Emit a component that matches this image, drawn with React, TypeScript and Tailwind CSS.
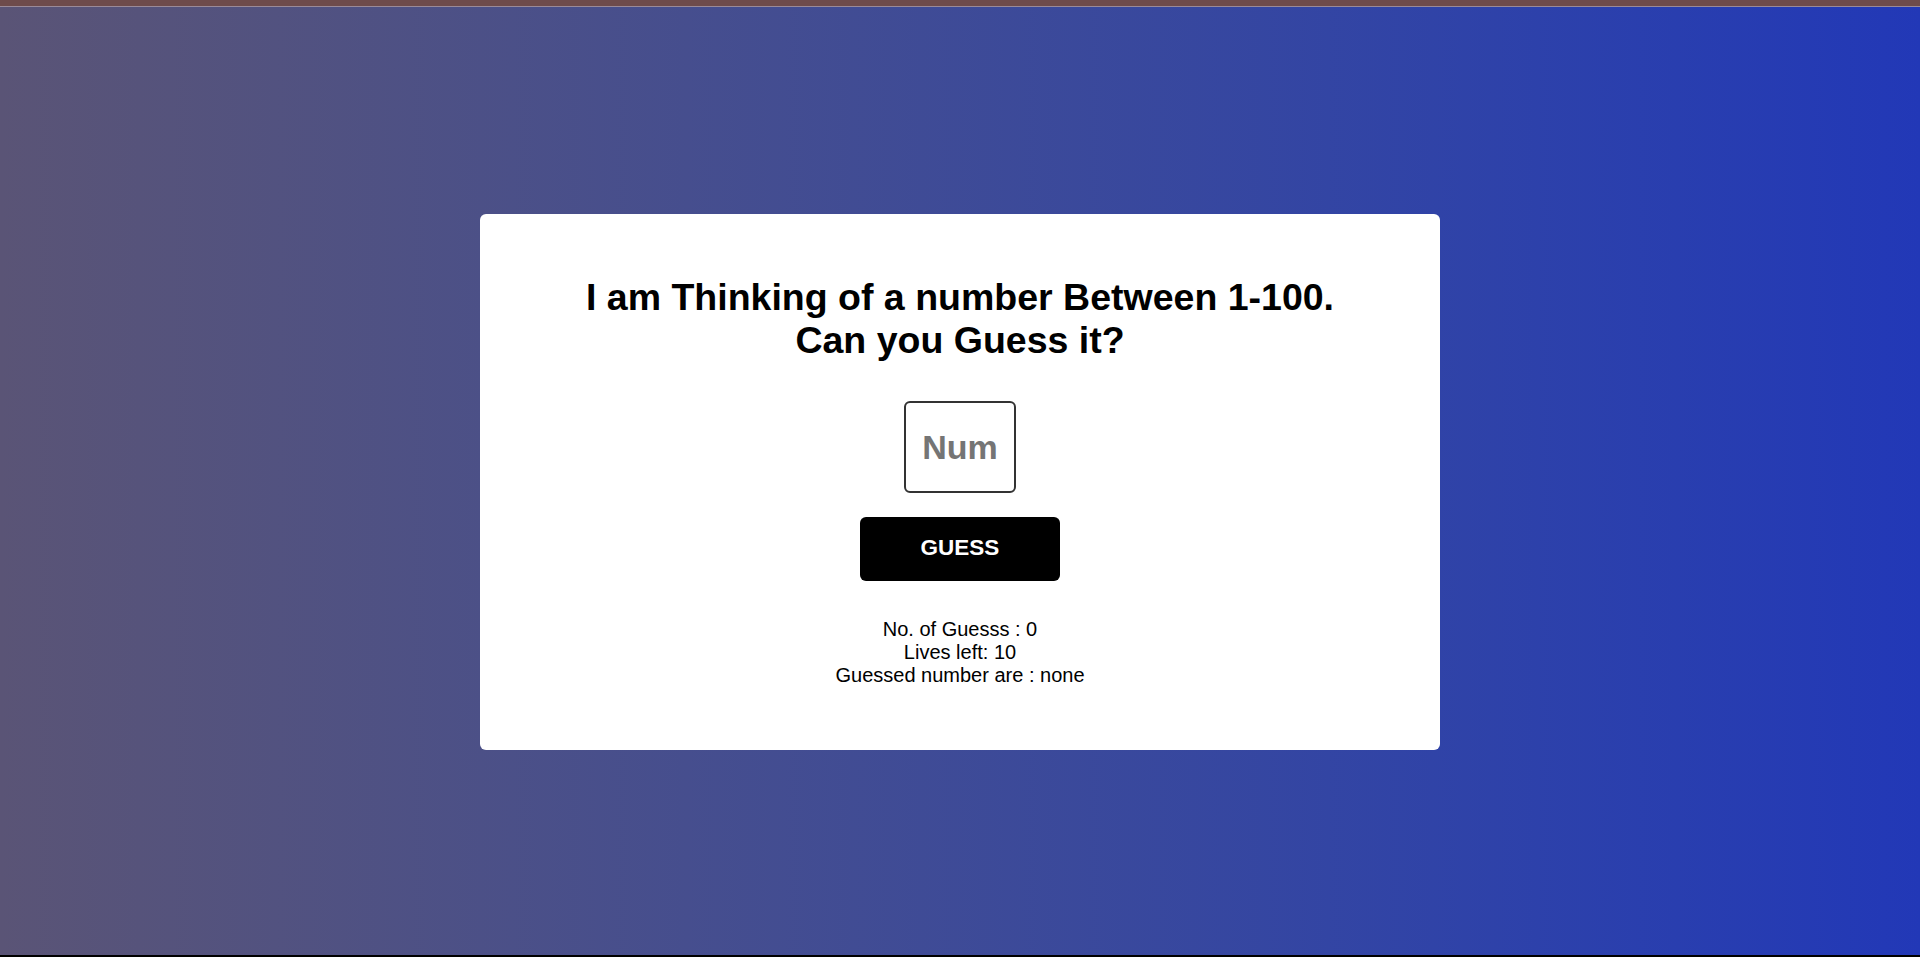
const App = () => {
  return (
    <div className="flex h-[957px] w-full flex-col font-['Liberation_Sans',Arial,sans-serif]">
      <div className="h-[6px] bg-[#6e4b4b]" />
      <div className="h-px bg-[#9a8a98]" />
      <div className="flex flex-1 items-center justify-center bg-gradient-to-r from-[#5a5476] to-[#2238b7]">
        <div className="mt-[2px] flex w-[960px] flex-col items-center rounded-md bg-white px-10 pt-[62px] pb-[63px]">
          <h1 className="text-center text-[37.5px] leading-[43px] font-bold text-black">
            I am Thinking of a number Between 1-100.
            <br />
            Can you Guess it?
          </h1>
          <input
            type="text"
            placeholder="Num"
            className="mt-[39px] h-[92px] w-[112px] rounded-md border-2 border-[#333] px-2 text-center text-[34px] font-bold text-black placeholder:text-[#757575] focus:outline-none"
          />
          <button className="mt-6 h-16 w-[200px] rounded-md bg-black pb-[2px] text-[22.5px] font-bold text-white">
            GUESS
          </button>
          <div className="mt-[37px] text-center text-[20px] leading-[23px] text-black">
            <p>No. of Guesss : 0</p>
            <p>Lives left: 10</p>
            <p>Guessed number are : none</p>
          </div>
        </div>
      </div>
      <div className="h-[2px] bg-black" />
    </div>
  );
};

export default App;
